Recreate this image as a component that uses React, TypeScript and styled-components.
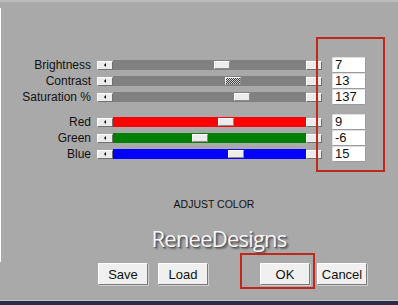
import React from 'react';
import styled, { createGlobalStyle } from 'styled-components';

const GlobalStyle = createGlobalStyle`
  html, body {
    margin: 0;
    padding: 0;
    background: #a9a9a9;
    overflow: hidden;
  }
`;

const NARROW = `"Liberation Sans Narrow", "Liberation Sans", Arial, sans-serif`;

const Window = styled.div`
  position: relative;
  width: 398px;
  height: 305px;
  box-sizing: border-box;
  display: flex;
  flex-direction: column;
  background: #a9a9a9;
  border-top: 2px solid #bdbdbd;
  padding-top: 55px;

  &::before {
    content: '';
    position: absolute;
    left: 0;
    top: 6px;
    width: 1px;
    height: 254px;
    background: #ffffff;
  }
`;

const Sliders = styled.div`
  display: flex;
  flex-direction: column;
  gap: 9px;
`;

const Group = styled.div`
  display: flex;
  flex-direction: column;
`;

const Row = styled.div`
  display: flex;
  align-items: center;
  height: 16px;
`;

const Label = styled.span`
  width: 91px;
  text-align: right;
  font-family: ${NARROW};
  font-size: 12px;
  line-height: 16px;
  color: #111;
  white-space: nowrap;
`;

const Slider = styled.div`
  margin-left: 6px;
  width: 225px;
  height: 10px;
  display: flex;
  align-items: center;
`;

const ArrowButton = styled.div<{ $dir: 'left' | 'right' }>`
  width: 16px;
  height: 9px;
  box-sizing: border-box;
  background: #ececec;
  border: 1px solid;
  border-color: #ffffff #707070 #707070 #ffffff;
  display: flex;
  align-items: center;
  justify-content: center;

  &::after {
    content: '';
    width: 0;
    height: 0;
    border-top: 2px solid transparent;
    border-bottom: 2px solid transparent;
    ${p => (p.$dir === 'left' ? 'border-right: 2px solid #000;' : 'border-left: 2px solid #000; margin-left: 6px;')}
  }
`;

const Track = styled.div<{ $color: string }>`
  position: relative;
  flex: 1;
  height: 10px;
  background: ${p => p.$color};
`;

const Thumb = styled.div<{ $focused?: boolean }>`
  position: absolute;
  top: 1px;
  width: 16px;
  height: 8px;
  box-sizing: border-box;
  border: 1px solid;
  border-color: #ffffff #8a8a8a #8a8a8a #ffffff;
  background: ${p =>
    p.$focused
      ? 'repeating-conic-gradient(#3c3c3c 0 25%, #d8d8d8 0 50%) 0 0 / 2px 2px'
      : '#ececec'};
`;

const ValueBox = styled.div`
  margin-left: 10px;
  width: 34px;
  height: 16px;
  box-sizing: border-box;
  background: #fff;
  border: 1px solid;
  border-color: #e0e0e0 #9a9a9a #9a9a9a #e0e0e0;
  border-radius: 2px;
  padding-left: 2px;
  font-family: ${NARROW};
  font-size: 13px;
  line-height: 14px;
  color: #111;
`;

const Highlight = styled.div`
  position: absolute;
  border: 2px solid #c1281b;
  box-sizing: border-box;
  pointer-events: none;
`;

const Caption = styled.div`
  margin-top: 35px;
  padding-left: 30px;
  text-align: center;
  font-family: "Liberation Sans", Arial, sans-serif;
  font-size: 10.5px;
  line-height: 14px;
  color: #111;
`;

const Brand = styled.div`
  margin-top: 14px;
  padding-left: 40px;
  text-align: center;
  font-family: "Open Sans", "Noto Sans", sans-serif;
  font-size: 22px;
  line-height: 26px;
  letter-spacing: -0.8px;
  color: #f6f6f6;
  text-shadow: 1px 1px 0 #5a5a5a, 2px 2px 2px rgba(0, 0, 0, 0.45);
`;

const ButtonRow = styled.div`
  margin-top: 12px;
  padding: 0 31px 0 98px;
  display: flex;
  justify-content: space-between;
`;

const ButtonGroup = styled.div<{ $gap: number }>`
  display: flex;
  gap: ${p => p.$gap}px;
`;

const Button = styled.button`
  width: 50px;
  height: 22px;
  box-sizing: border-box;
  padding: 0;
  background: #f0f0f0;
  border: 1px solid;
  border-color: #ffffff #7a7a7a #7a7a7a #ffffff;
  box-shadow: 1px 1px 0 #d0d0d0;
  font-family: ${NARROW};
  font-size: 13px;
  color: #111;
  cursor: pointer;
`;

const Spacer = styled.div`
  flex: 1;
  border-bottom: 1px solid #c4c4c4;
`;

const BottomStrip = styled.div`
  height: 4px;
  background: #2c2c48;
`;

type SliderRow = { label: string; value: string; color: string; thumb: number; focused?: boolean };

const toneRows: SliderRow[] = [
  { label: 'Brightness', value: '7', color: '#808080', thumb: 101 },
  { label: 'Contrast', value: '13', color: '#808080', thumb: 112, focused: true },
  { label: 'Saturation %', value: '137', color: '#808080', thumb: 121 },
];

const channelRows: SliderRow[] = [
  { label: 'Red', value: '9', color: '#ff0000', thumb: 105 },
  { label: 'Green', value: '-6', color: '#008000', thumb: 79 },
  { label: 'Blue', value: '15', color: '#0000ff', thumb: 115 },
];

const renderRow = (row: SliderRow) => (
  <Row key={row.label}>
    <Label>{row.label}</Label>
    <Slider>
      <ArrowButton $dir="left" />
      <Track $color={row.color}>
        <Thumb $focused={row.focused} style={{ left: row.thumb }} />
      </Track>
      <ArrowButton $dir="right" />
    </Slider>
    <ValueBox>{row.value}</ValueBox>
  </Row>
);

export default function App() {
  return (
    <>
      <GlobalStyle />
      <Window>
        <Sliders>
          <Group>{toneRows.map(renderRow)}</Group>
          <Group>{channelRows.map(renderRow)}</Group>
        </Sliders>
        <Caption>ADJUST COLOR</Caption>
        <Brand>ReneeDesigns</Brand>
        <ButtonRow>
          <ButtonGroup $gap={10}>
            <Button>Save</Button>
            <Button>Load</Button>
          </ButtonGroup>
          <ButtonGroup $gap={7}>
            <Button>OK</Button>
            <Button>Cancel</Button>
          </ButtonGroup>
        </ButtonRow>
        <Spacer />
        <BottomStrip />
        <Highlight style={{ left: 316, top: 35, width: 69, height: 135 }} />
        <Highlight style={{ left: 240, top: 251, width: 75, height: 36 }} />
      </Window>
    </>
  );
}
